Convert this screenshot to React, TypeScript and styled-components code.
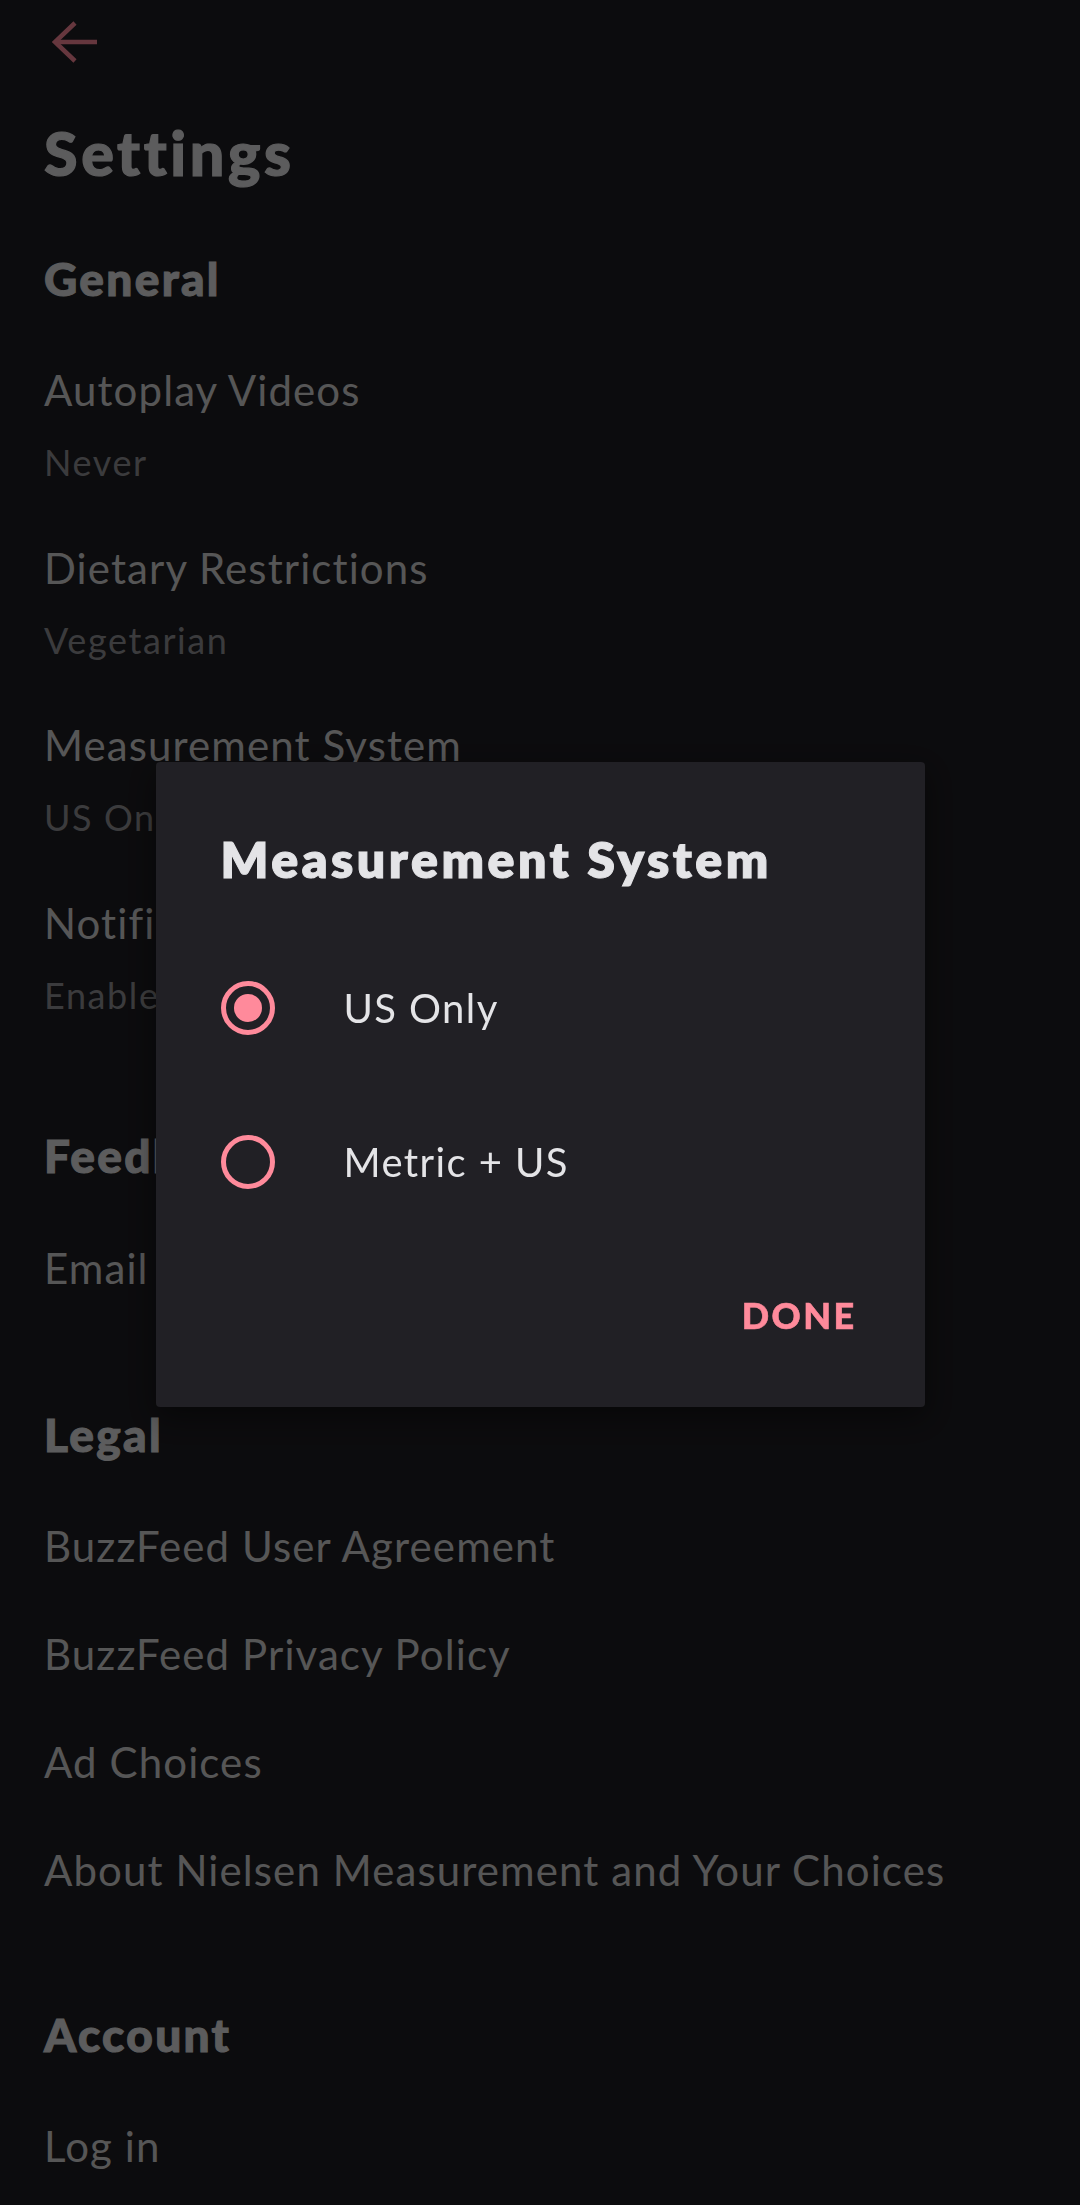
import React from "react";
import styled, { createGlobalStyle } from "styled-components";

const Global = createGlobalStyle`
  html, body {
    margin: 0;
    padding: 0;
    background: #1f1e23;
  }
  body {
    font-family: Lato, "Open Sans", "Liberation Sans", sans-serif;
    -webkit-font-smoothing: antialiased;
  }
  * { box-sizing: border-box; }
`;

const Page = styled.div`
  position: relative;
  min-height: 2205px;
  padding: 21px 44px 0 44px;
  background: #1f1e23;
  color: #e2e2e4;
  overflow: hidden;
`;

const BackButton = styled.button`
  display: block;
  width: 46px;
  height: 42px;
  margin: 0 0 0 8px;
  padding: 0;
  border: 0;
  background: transparent;
  color: #ff8a9b;
  cursor: pointer;
`;

const PageTitle = styled.h1`
  margin: 53px 0 0 0;
  font-size: 61px;
  line-height: 1.2;
  font-weight: 900;
  color: #e6e6e8;
  letter-spacing: 3.6px;
  -webkit-text-stroke: 1.2px #e6e6e8;
`;

const Section = styled.section<{ $top: number }>`
  margin-top: ${(p) => p.$top}px;
  display: flex;
  flex-direction: column;
`;

const SectionHeading = styled.h2`
  margin: 0 0 59px 0;
  font-size: 46px;
  line-height: 1.2;
  font-weight: 900;
  color: #e6e6e8;
  letter-spacing: 2.3px;
  -webkit-text-stroke: 1px #e6e6e8;
`;

const ItemList = styled.div<{ $gap: number }>`
  display: flex;
  flex-direction: column;
  gap: ${(p) => p.$gap}px;
`;

const Item = styled.div`
  display: flex;
  flex-direction: column;
  gap: 25.6px;
`;

const ItemTitle = styled.div`
  font-size: 42px;
  line-height: 1.2;
  font-weight: 400;
  color: #d6d6d8;
  letter-spacing: 1.1px;
  white-space: nowrap;
`;

const ItemValue = styled.div`
  font-size: 36px;
  line-height: 1.2;
  font-weight: 400;
  color: #959598;
  letter-spacing: 1.6px;
  white-space: nowrap;
`;

const Scrim = styled.div`
  position: fixed;
  inset: 0;
  background: rgba(0, 0, 0, 0.6);
  display: flex;
  justify-content: center;
  align-items: flex-start;
  padding-top: 762px;
`;

const Dialog = styled.div`
  width: 769px;
  background: #212025;
  border-radius: 4px;
  padding: 66.6px 68px 70px 65px;
  box-shadow: 0 10px 30px rgba(0, 0, 0, 0.45);
  display: flex;
  flex-direction: column;
`;

const DialogTitle = styled.h3`
  margin: 0 0 42px 0;
  font-size: 50px;
  line-height: 1.2;
  font-weight: 800;
  color: #e4e4e7;
  letter-spacing: 3.5px;
  -webkit-text-stroke: 1px #e4e4e7;
`;

const Option = styled.label`
  display: flex;
  align-items: center;
  height: 154px;
  gap: 69px;
  cursor: pointer;
`;

const Radio = styled.span<{ $checked: boolean }>`
  position: relative;
  flex: none;
  width: 54px;
  height: 54px;
  border-radius: 50%;
  border: 5px solid #ff8a9b;
  &::after {
    content: "";
    position: absolute;
    left: 8px;
    top: 8px;
    width: 28px;
    height: 28px;
    border-radius: 50%;
    background: #ff8a9b;
    display: ${(p) => (p.$checked ? "block" : "none")};
  }
`;

const OptionLabel = styled.span`
  font-size: 40px;
  line-height: 1.2;
  font-weight: 400;
  color: #e4e4e7;
  letter-spacing: 1.4px;
`;

const Actions = styled.div`
  display: flex;
  justify-content: flex-end;
  margin-top: 55.5px;
`;

const DoneButton = styled.button`
  padding: 0;
  border: 0;
  background: transparent;
  font-family: inherit;
  font-size: 36px;
  line-height: 1.2;
  font-weight: 900;
  letter-spacing: 2.4px;
  color: #ff8a9b;
  -webkit-text-stroke: 0.6px #ff8a9b;
  cursor: pointer;
`;

const BackArrow = () => (
  <svg width="46" height="42" viewBox="0 0 46 42" fill="none" stroke="currentColor" strokeWidth="4.5" strokeLinecap="butt" strokeLinejoin="miter">
    <line x1="3" y1="21" x2="45" y2="21" />
    <polyline points="23,2 3,21 23,40" />
  </svg>
);

type Entry = { title: string; value?: string };

const general: Entry[] = [
  { title: "Autoplay Videos", value: "Never" },
  { title: "Dietary Restrictions", value: "Vegetarian" },
  { title: "Measurement System", value: "US Only" },
  { title: "Notifications", value: "Enabled" },
];

const legal: Entry[] = [
  { title: "BuzzFeed User Agreement" },
  { title: "BuzzFeed Privacy Policy" },
  { title: "Ad Choices" },
  { title: "About Nielsen Measurement and Your Choices" },
];

const options = ["US Only", "Metric + US"];

export default function App() {
  const [selected, setSelected] = React.useState("US Only");
  return (
    <>
      <Global />
      <Page>
        <BackButton aria-label="Back">
          <BackArrow />
        </BackButton>
        <PageTitle>Settings</PageTitle>

        <Section $top={61.6}>
          <SectionHeading>General</SectionHeading>
          <ItemList $gap={58.4}>
            {general.map((e) => (
              <Item key={e.title}>
                <ItemTitle>{e.title}</ItemTitle>
                {e.value && <ItemValue>{e.value}</ItemValue>}
              </Item>
            ))}
          </ItemList>
        </Section>

        <Section $top={111.5}>
          <SectionHeading>Feedback</SectionHeading>
          <ItemList $gap={58}>
            <Item>
              <ItemTitle>Email Feedback</ItemTitle>
            </Item>
          </ItemList>
        </Section>

        <Section $top={113.7}>
          <SectionHeading>Legal</SectionHeading>
          <ItemList $gap={57.6}>
            {legal.map((e) => (
              <Item key={e.title}>
                <ItemTitle>{e.title}</ItemTitle>
              </Item>
            ))}
          </ItemList>
        </Section>

        <Section $top={111.7}>
          <SectionHeading>Account</SectionHeading>
          <ItemList $gap={58}>
            <Item>
              <ItemTitle>Log in</ItemTitle>
            </Item>
          </ItemList>
        </Section>

        <Scrim>
          <Dialog role="dialog" aria-label="Measurement System">
            <DialogTitle>Measurement System</DialogTitle>
            {options.map((o) => (
              <Option key={o} onClick={() => setSelected(o)}>
                <Radio $checked={selected === o} />
                <OptionLabel>{o}</OptionLabel>
              </Option>
            ))}
            <Actions>
              <DoneButton>DONE</DoneButton>
            </Actions>
          </Dialog>
        </Scrim>
      </Page>
    </>
  );
}
